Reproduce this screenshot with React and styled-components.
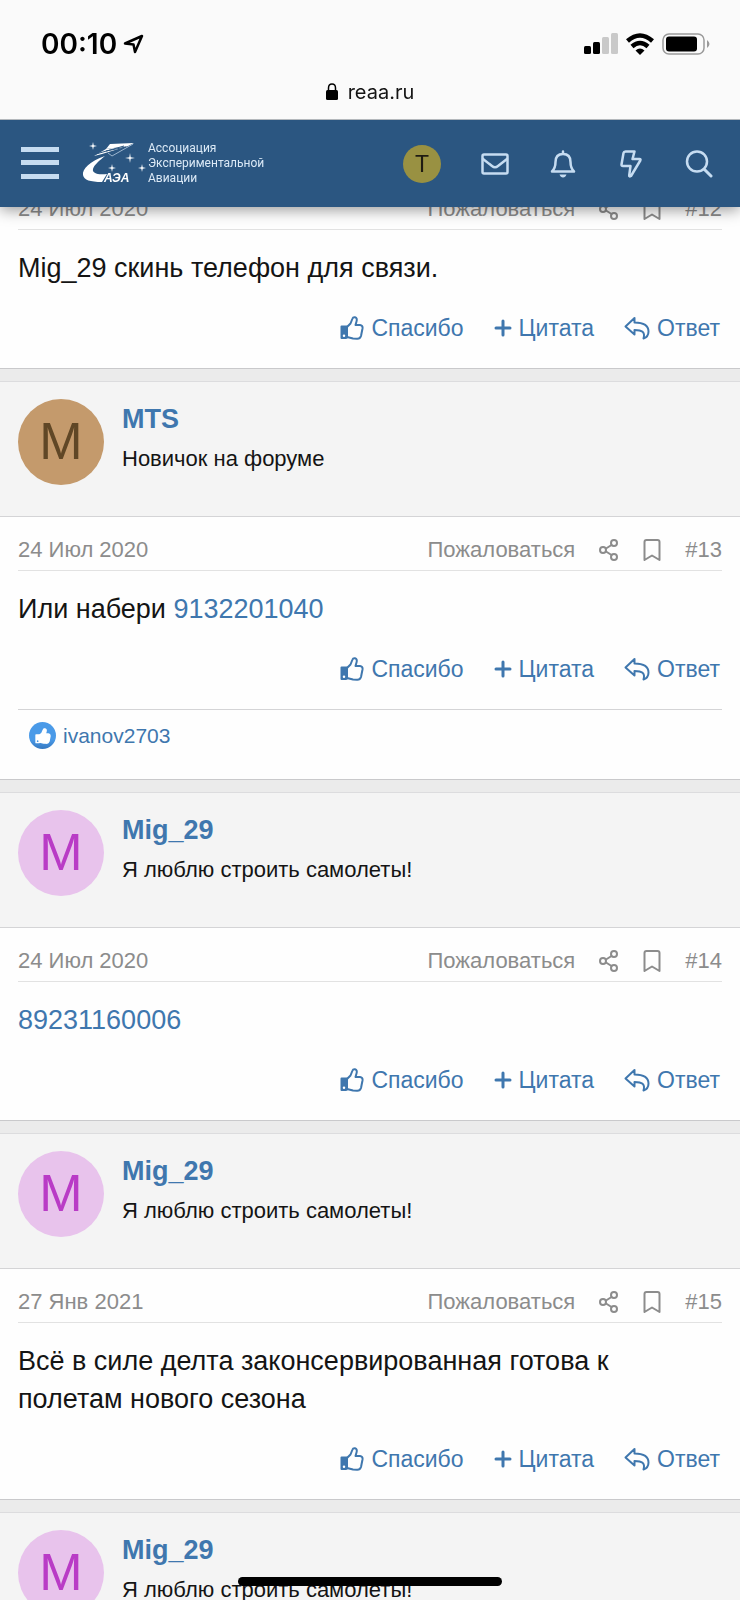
import React from 'react';
import styled, { createGlobalStyle } from 'styled-components';

const posts = [
    { id: 12, date: '24 Июл 2020', text: 'Mig_29 скинь телефон для связи.' },
    { id: 13, date: '24 Июл 2020', user: 'mts', text: 'Или набери ', phone: '9132201040', liked: 'ivanov2703' },
    { id: 14, date: '24 Июл 2020', user: 'mig', phone: '89231160006' },
    { id: 15, date: '27 Янв 2021', user: 'mig', text: 'Всё в силе делта законсервированная готова к полетам нового сезона' },
];

const users = {
    mts: { name: 'MTS', title: 'Новичок на форуме', bg: '#c49a6c', color: '#604726' },
    mig: { name: 'Mig_29', title: 'Я люблю строить самолеты!', bg: '#e8c3ec', color: '#b93bc6' },
};

const Star = ({ x, y, r }) => (
    <path d={`M${x} ${y - r}L${x + 0.7} ${y - 0.7}L${x + r} ${y}L${x + 0.7} ${y + 0.7}L${x} ${y + r}L${x - 0.7} ${y + 0.7}L${x - r} ${y}L${x - 0.7} ${y - 0.7}Z`} />
);

const Logo = () => (
    <svg width="66" height="44" viewBox="0 0 66 44" fill="#fff" aria-hidden="true">
        <path d="M28 2L52 1L46 4L24 7Z" />
        <path d="M24 7L46 4L20 12L12 14Z" />
        <path d="M51 2L30 14L26 11" fill="none" stroke="#9db6cf" strokeWidth="1" />
        <path d="M14 12L42 4M24 9L44 5" fill="none" stroke="#2b5681" strokeWidth="1" />
        <path d="M23 14C8 19 0 27 1 33C2 38 8 40 20 40L25 32C15 33 10 31 11 27C12 23 18 18 23 14Z" />
        <Star x={11} y={4} r={4} />
        <Star x={48} y={16} r={5} />
        <Star x={30} y={26} r={4} />
        <Star x={60} y={26} r={4} />
        <LogoText x="22" y="40">АЭА</LogoText>
    </svg>
);

const Thumb = ({ size = 24, solid }) => (
    <svg width={size} height={size} viewBox="0 0 24 24" aria-hidden="true">
        <path
            d="M7 11L10.500 7.500L12.500 2.500Q13 1 15 1.300Q17.500 2 16.500 5.500L15.500 9H20Q23 9.500 22.500 12.500L21 20Q20 23 17 22.800L13 22.500L7 21Z"
            fill={solid ? '#fff' : 'none'}
            stroke={solid ? '#fff' : 'currentColor'}
            strokeWidth="2"
            strokeLinejoin="round"
        />
        <path
            d="M1.500 9.500H7Q8 9.500 8 10.500V21Q8 23 6 23H1.500Q0.500 23 0.500 22V10.500Q0.500 9.500 1.500 9.500ZM4 18.500A1.200 1.200 0 1 0 4 21A1.200 1.200 0 1 0 4 18.500Z"
            fill={solid ? '#fff' : 'currentColor'}
            fillRule="evenodd"
        />
    </svg>
);

const Line = ({ w = 24, h = 24, box = '0 0 24 24', width = 2, children }) => (
    <svg
        width={w}
        height={h}
        viewBox={box}
        fill="none"
        stroke="currentColor"
        strokeWidth={width}
        strokeLinejoin="round"
        strokeLinecap="round"
        aria-hidden="true"
    >
        {children}
    </svg>
);

const UserInfo = ({ user }) => (
    <UserCell>
        <Avatar $bg={user.bg} $color={user.color}>M</Avatar>
        <div>
            <UserName href="#user">{user.name}</UserName>
            <UserTitle>{user.title}</UserTitle>
        </div>
    </UserCell>
);

const Post = ({ post }) => (
    <Article>
        {post.user && <UserInfo user={users[post.user]} />}
        <Content>
            <Attribution>
                <MutedLink href="#date">{post.date}</MutedLink>
                <Tools>
                    <MutedLink href="#report">Пожаловаться</MutedLink>
                    <MutedLink href="#share" aria-label="Поделиться">
                        <Line w={20} h={24} box="0 0 20 24">
                            <circle cx="4" cy="12" r="3" />
                            <circle cx="15" cy="5" r="3" />
                            <circle cx="15" cy="19" r="3" />
                            <path d="M7 10.500L12.500 7M7 13.500L12.500 17" />
                        </Line>
                    </MutedLink>
                    <MutedLink href="#bookmark" aria-label="Закладка">
                        <Line w={18} h={24} box="0 0 18 24">
                            <path d="M1.500 22V4Q1.500 2 3.500 2H14.500Q16.500 2 16.500 4V22L9 17.500Z" />
                        </Line>
                    </MutedLink>
                    <MutedLink href="#post">#{post.id}</MutedLink>
                </Tools>
            </Attribution>
            <Message>
                {post.text}
                {post.phone && <a href={`tel:${post.phone}`}>{post.phone}</a>}
            </Message>
            <Actions>
                <Action href="#like"><Thumb />Спасибо</Action>
                <Action href="#quote">
                    <Line w={18} h={18} box="0 0 18 18" width={3}><path d="M9 2V16M2 9H16" /></Line>
                    Цитата
                </Action>
                <Action href="#reply">
                    <Line w={26} h={24} box="0 0 26 24">
                        <path d="M10.500 2V6.500C20 6.500 24.500 9.500 24.500 15.500C24.500 19 22.500 21.500 19.500 22.500C21.500 16 18 14 10.500 14V18.500L1.500 10.500Z" />
                    </Line>
                    Ответ
                </Action>
            </Actions>
            {post.liked &&
                <Reactions>
                    <Badge><Thumb size={16} solid /></Badge>
                    <a href="#liked">{post.liked}</a>
                </Reactions>
            }
        </Content>
    </Article>
);

const App = () => (
    <Page>
        <GlobalStyle />
        <Top>
            <StatusBar>
                <Clock>
                    00:10
                    <svg width="22" height="22" viewBox="0 0 22 22" fill="none" stroke="#000" strokeWidth="2.500" strokeLinejoin="round">
                        <path d="M2 10.500L19 3L12 19L10.500 11.500Z" />
                    </svg>
                </Clock>
                <Indicators>
                    <svg width="34" height="22" viewBox="0 0 34 22">
                        <rect x="0" y="13" width="7" height="8" rx="1.500" />
                        <rect x="9" y="9" width="7" height="12" rx="1.500" />
                        <rect x="18" y="4" width="7" height="17" rx="1.500" fill="#c9c9c9" />
                        <rect x="27" y="0" width="7" height="21" rx="1.500" fill="#c9c9c9" />
                    </svg>
                    <svg width="28" height="22" viewBox="0 0 28 22" fill="none" stroke="#000" strokeWidth="4.500">
                        <path d="M1.500 8Q14 -3 26.500 8" />
                        <path d="M6 13.500Q14 6.500 22 13.500" />
                        <path d="M9.500 17.500Q14 13.500 18.500 17.500L14 22Z" fill="#000" stroke="none" />
                    </svg>
                    <svg width="48" height="22" viewBox="0 0 48 22">
                        <rect x="1" y="1" width="41" height="20" rx="6" fill="none" stroke="#9a9a9a" strokeWidth="1.500" />
                        <rect x="4" y="3.500" width="31" height="15" rx="3" />
                        <path d="M45 7Q47.500 9 47.500 11Q47.500 13 45 15Z" fill="#9a9a9a" />
                    </svg>
                </Indicators>
            </StatusBar>
            <Address>
                <svg width="12" height="17" viewBox="0 0 12 17">
                    <rect x="0" y="7" width="12" height="10" rx="1.500" />
                    <path d="M2.500 8V5Q2.500 1 6 1Q9.500 1 9.500 5V8" fill="none" stroke="#000" strokeWidth="1.500" />
                </svg>
                reaa.ru
            </Address>
            <Nav>
                <NavButton aria-label="Меню">
                    <svg width="38" height="34" viewBox="0 0 38 34" fill="currentColor">
                        <rect y="0" width="38" height="5" />
                        <rect y="13" width="38" height="5" />
                        <rect y="27" width="38" height="5" />
                    </svg>
                </NavButton>
                <Brand href="#home">
                    <Logo />
                    <span>Ассоциация<br />Экспериментальной<br />Авиации</span>
                </Brand>
                <NavTools>
                    <NavAvatar aria-label="Профиль">T</NavAvatar>
                    <NavButton aria-label="Сообщения">
                        <Line w={28} h={28} box="0 0 28 28" width={2.5}>
                            <rect x="1.500" y="4.500" width="25" height="19" rx="1.500" />
                            <path d="M2 9L11 16Q14 18.500 17 16L26 9" />
                        </Line>
                    </NavButton>
                    <NavButton aria-label="Уведомления">
                        <Line w={28} h={28} box="0 0 28 28" width={2.5}>
                            <path d="M14 1.500V3.500M3 21.500Q6.500 18 6.500 12Q6.500 4 14 4Q21.500 4 21.500 12Q21.500 18 25 21.500Z" />
                            <path d="M10.500 24.500H17.500Q16.500 27.500 14 27.500Q11.500 27.500 10.500 24.500Z" fill="currentColor" stroke="none" />
                        </Line>
                    </NavButton>
                    <NavButton aria-label="Новое">
                        <Line w={28} h={28} box="0 0 28 28" width={2.5}>
                            <path d="M8.500 1.500H17.500L15.500 9H22.500Q24 9 23.300 10.500L14 26Q12 27 12.200 25.500L13.500 16H6Q4.300 16 4.500 14.500L6.500 3Q6.800 1.500 8.500 1.500Z" />
                        </Line>
                    </NavButton>
                    <NavButton aria-label="Поиск">
                        <Line w={28} h={28} box="0 0 28 28" width={2.5}>
                            <circle cx="12" cy="11.500" r="10" />
                            <path d="M19.500 19.500L26 26" strokeWidth="3" />
                        </Line>
                    </NavButton>
                </NavTools>
            </Nav>
        </Top>
        <Thread>
            {posts.map((post) => <Post key={post.id} post={post} />)}
            <Article>
                <UserInfo user={users.mig} />
            </Article>
        </Thread>
        <HomeBar />
    </Page>
);
export default App;

const GlobalStyle = createGlobalStyle`
    * {
        box-sizing: border-box;
    }
    body {
        margin: 0;
        font-family: "Liberation Sans", Arial, sans-serif;
        color: #141414;
    }
    a {
        color: #3f77ae;
        text-decoration: none;
    }
    button {
        padding: 0;
        border: none;
        background: none;
        cursor: pointer;
    }
    svg {
        display: block;
        flex: none;
    }
`;

const Page = styled.div`
    height: 100vh;
    overflow: hidden;
    background: #ebebeb;
`;
const Top = styled.header`
    position: fixed;
    top: 0;
    left: 0;
    right: 0;
    z-index: 10;
    background: #fafafa;
    box-shadow: 0 3px 14px rgba(0,0,0,.4);
`;
const StatusBar = styled.div`
    display: flex;
    justify-content: space-between;
    align-items: center;
    height: 76px;
    padding: 12px 30px 0 41px;
`;
const Clock = styled.div`
    display: flex;
    align-items: center;
    gap: 6px;
    font: 600 28px/36px Inter, sans-serif;
    color: #000;
`;
const Indicators = styled.div`
    display: flex;
    align-items: center;
    gap: 8px;
`;
const Address = styled.div`
    display: flex;
    justify-content: center;
    align-items: center;
    gap: 10px;
    height: 44px;
    padding-bottom: 12px;
    border-bottom: 1px solid #b4b8bc;
    font: 400 20px/30px Inter, sans-serif;
`;
const Nav = styled.nav`
    display: flex;
    align-items: center;
    height: 87px;
    padding: 0 27px 0 21px;
    background: #2b5681;
`;
const NavButton = styled.button`
    color: #c6dcf1;
`;
const Brand = styled.a`
    display: flex;
    align-items: center;
    margin-left: 23px;
    color: #dbe9f6;
    font: 400 12px/15px Roboto, sans-serif;
`;
const LogoText = styled.text`
    font: italic 700 12px "Liberation Sans", sans-serif;
`;
const NavTools = styled.div`
    display: flex;
    align-items: center;
    gap: 40px;
    margin-left: auto;
`;
const NavAvatar = styled.button`
    width: 38px;
    height: 38px;
    border-radius: 50%;
    background: #999142;
    color: #1f1b12;
    font: 400 23px/38px "Liberation Sans", sans-serif;
`;
const Thread = styled.main`
    display: flex;
    flex-direction: column;
    gap: 12px;
    padding-top: 176px;
`;
const Article = styled.article`
    border-bottom: 1px solid #c9c9cb;
    background: #fefefe;
`;
const UserCell = styled.div`
    display: flex;
    gap: 18px;
    height: 136px;
    padding: 17px 18px;
    border-top: 1px solid #dcdcde;
    border-bottom: 1px solid #d4d4d6;
    background: #f4f4f4;
`;
const Avatar = styled.div`
    flex: none;
    width: 86px;
    height: 86px;
    border-radius: 50%;
    background: ${({ $bg }) => $bg};
    color: ${({ $color }) => $color};
    font-size: 52px;
    line-height: 84px;
    text-align: center;
`;
const UserName = styled.a`
    display: block;
    font-size: 27px;
    font-weight: 700;
    line-height: 40px;
`;
const UserTitle = styled.div`
    margin-top: 5px;
    font-size: 22px;
    line-height: 30px;
`;
const Content = styled.div`
    padding: 0 18px;
`;
const Attribution = styled.div`
    display: flex;
    justify-content: space-between;
    align-items: center;
    height: 54px;
    padding-top: 12px;
    border-bottom: 1px solid #e2e2e2;
    font-size: 22px;
`;
const Tools = styled.div`
    display: flex;
    align-items: center;
    gap: 24px;
`;
const MutedLink = styled.a`
    color: #8c8c8c;
`;
const Message = styled.div`
    min-height: 38px;
    margin-top: 19px;
    padding-right: 18px;
    font-size: 27px;
    line-height: 38px;
`;
const Actions = styled.div`
    display: flex;
    justify-content: flex-end;
    align-items: center;
    gap: 30px;
    height: 32px;
    margin: 25px 0 24px;
    padding-right: 2px;
    font-size: 23px;
`;
const Action = styled.a`
    display: flex;
    align-items: center;
    gap: 7px;
`;
const Reactions = styled.div`
    display: flex;
    align-items: center;
    gap: 7px;
    height: 70px;
    padding: 0 11px 18px;
    border-top: 1px solid #d4d4d6;
    font-size: 21px;
`;
const Badge = styled.span`
    display: flex;
    justify-content: center;
    align-items: center;
    width: 27px;
    height: 27px;
    border-radius: 50%;
    background: linear-gradient(#4a9ae8 65%, #3578c0);
`;
const HomeBar = styled.div`
    position: fixed;
    bottom: 14px;
    left: 50%;
    z-index: 11;
    width: 264px;
    height: 9px;
    margin-left: -132px;
    border-radius: 5px;
    background: #000;
`;
